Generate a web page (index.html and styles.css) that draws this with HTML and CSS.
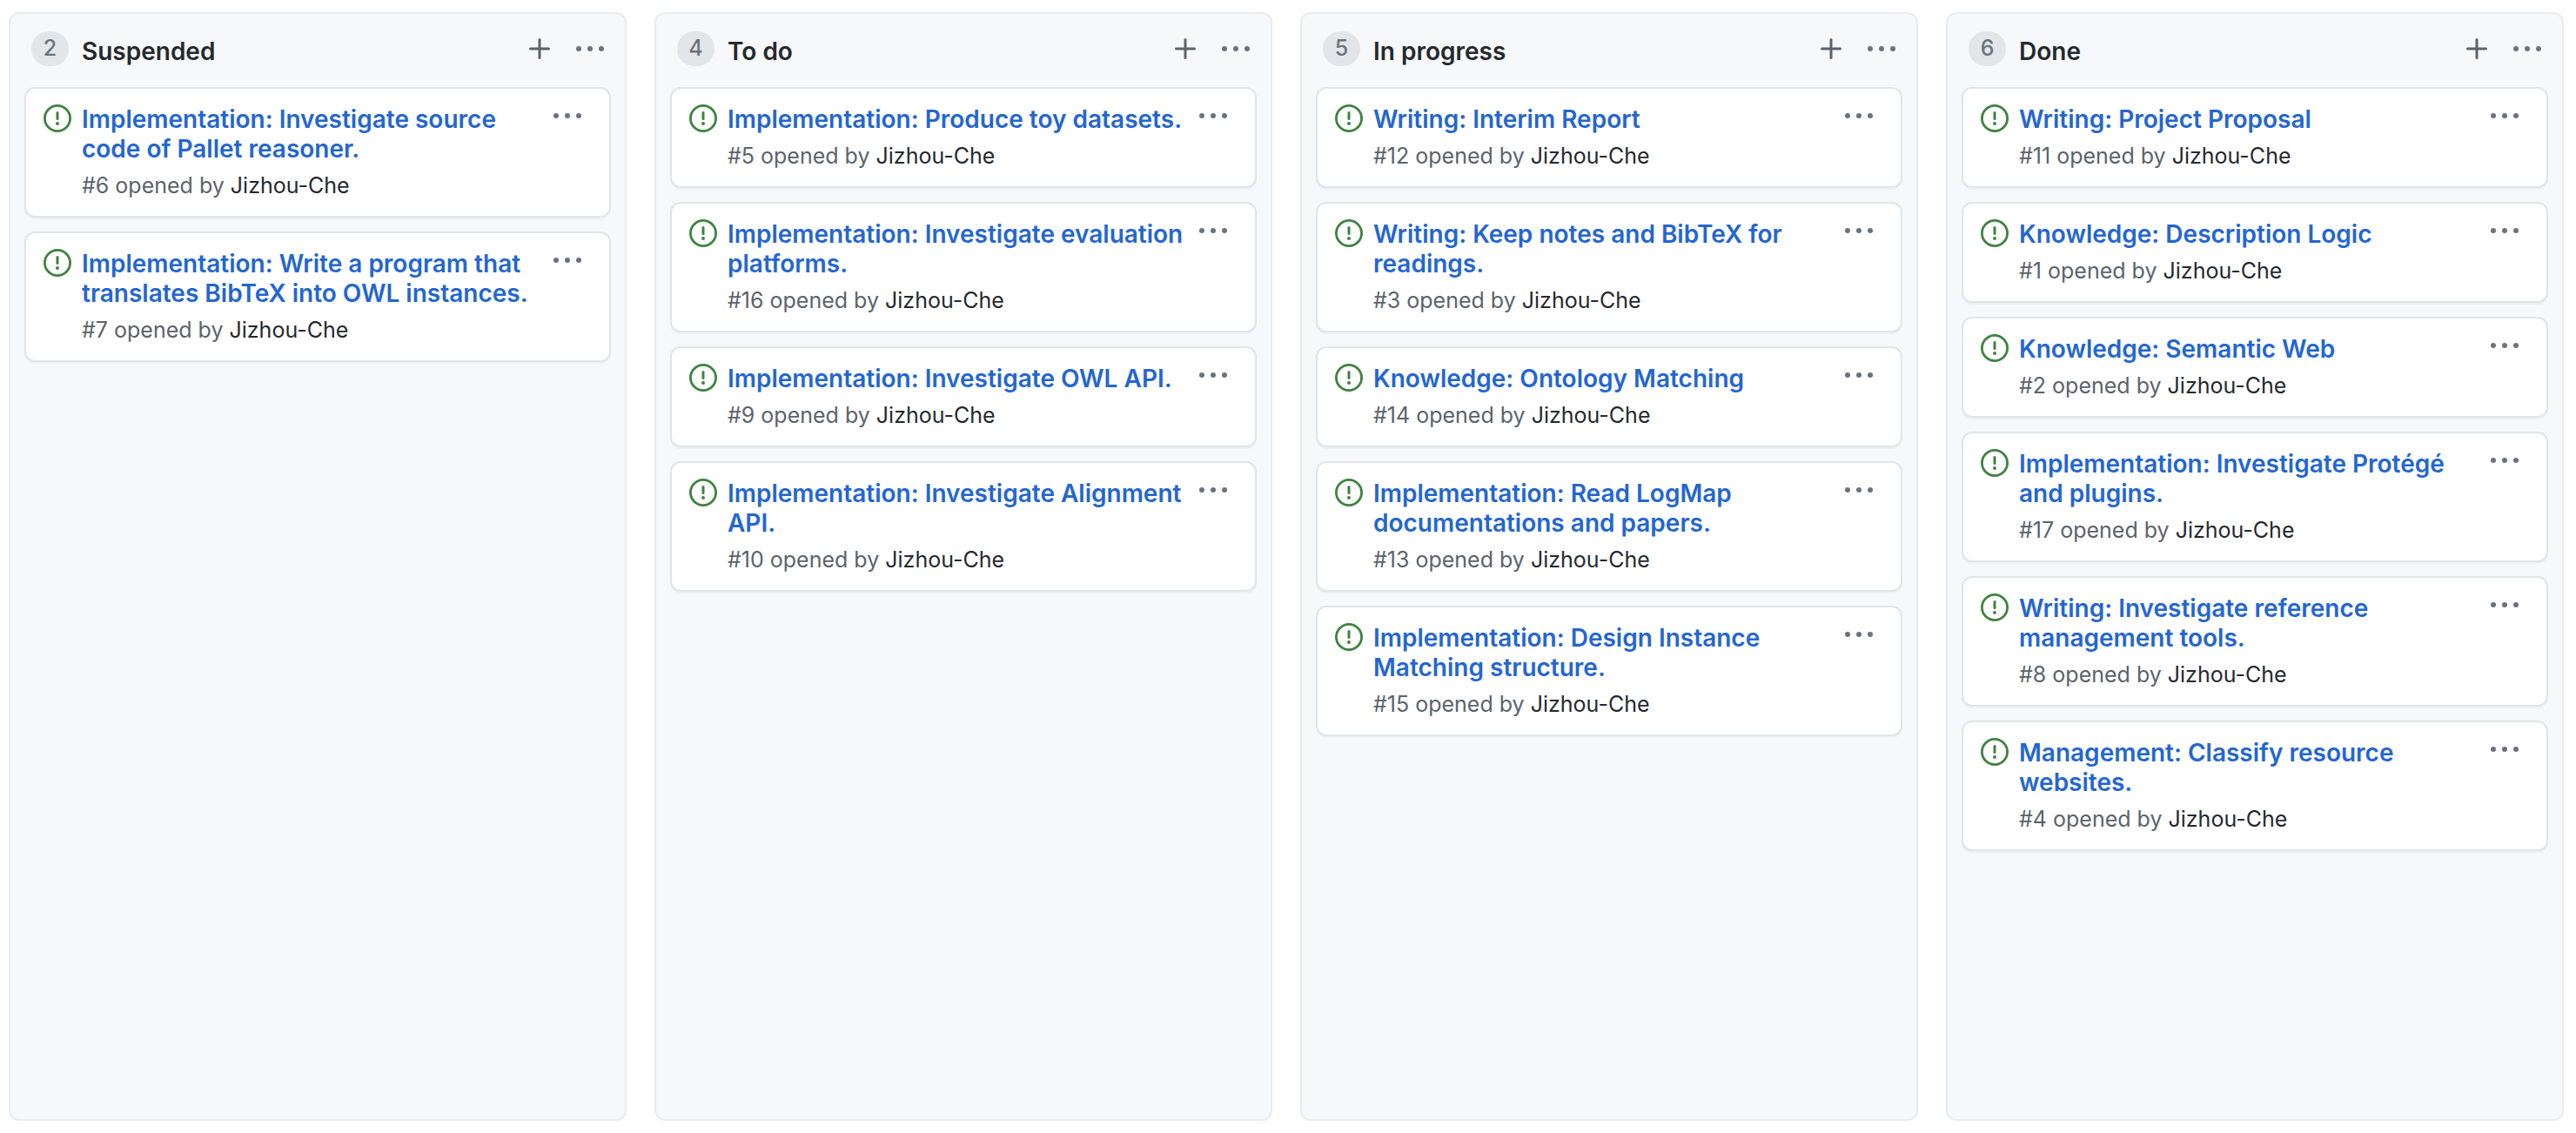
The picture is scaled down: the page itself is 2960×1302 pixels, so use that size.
FILE: index.html
```html
<!DOCTYPE html>
<html lang="en">
<head>
<meta charset="utf-8">
<title>Project board</title>
<link rel="stylesheet" href="styles.css">
</head>
<body>
<svg class="sprite" aria-hidden="true">
  <symbol id="issue" viewBox="0 0 16 16"><circle cx="8" cy="8" r="7.3" fill="none" stroke="currentColor" stroke-width="1.4"/><path d="M8 4.75v3.5" fill="none" stroke="currentColor" stroke-width="1.5" stroke-linecap="round"/><circle cx="8" cy="11" r="1" fill="currentColor"/></symbol>
  <symbol id="plus" viewBox="0 0 24 24"><path d="M12 1.5v21M1.5 12h21" fill="none" stroke="currentColor" stroke-width="3" stroke-linecap="round"/></symbol>
  <symbol id="dots" viewBox="0 0 32 6"><circle cx="3" cy="3" r="3"/><circle cx="16" cy="3" r="3"/><circle cx="29" cy="3" r="3"/></symbol>
</svg>
<main class="board">
  <section class="column">
    <header class="column-head">
      <span class="count">2</span>
      <h2 class="column-title">Suspended</h2>
      <button class="icon-button" aria-label="Add a card to Suspended"><svg class="plus"><use href="#plus"/></svg></button>
      <button class="icon-button" aria-label="Suspended options"><svg class="dots"><use href="#dots"/></svg></button>
    </header>
    <div class="cards">
      <article class="card">
        <svg class="issue"><use href="#issue"/></svg>
        <div class="card-body"><a class="card-title" href="#6">Implementation: Investigate source code of Pallet reasoner.</a><p class="meta">#6 opened by <a class="author" href="#Jizhou-Che">Jizhou-Che</a></p></div>
        <button class="icon-button card-menu" aria-label="Card options"><svg class="dots"><use href="#dots"/></svg></button>
      </article>
      <article class="card">
        <svg class="issue"><use href="#issue"/></svg>
        <div class="card-body"><a class="card-title" href="#7">Implementation: Write a program that translates BibTeX into OWL instances.</a><p class="meta">#7 opened by <a class="author" href="#Jizhou-Che">Jizhou-Che</a></p></div>
        <button class="icon-button card-menu" aria-label="Card options"><svg class="dots"><use href="#dots"/></svg></button>
      </article>
    </div>
  </section>

  <section class="column">
    <header class="column-head">
      <span class="count">4</span>
      <h2 class="column-title">To do</h2>
      <button class="icon-button" aria-label="Add a card to To do"><svg class="plus"><use href="#plus"/></svg></button>
      <button class="icon-button" aria-label="To do options"><svg class="dots"><use href="#dots"/></svg></button>
    </header>
    <div class="cards">
      <article class="card">
        <svg class="issue"><use href="#issue"/></svg>
        <div class="card-body"><a class="card-title" href="#5">Implementation: Produce toy datasets.</a><p class="meta">#5 opened by <a class="author" href="#Jizhou-Che">Jizhou-Che</a></p></div>
        <button class="icon-button card-menu" aria-label="Card options"><svg class="dots"><use href="#dots"/></svg></button>
      </article>
      <article class="card">
        <svg class="issue"><use href="#issue"/></svg>
        <div class="card-body"><a class="card-title" href="#16">Implementation: Investigate evaluation platforms.</a><p class="meta">#16 opened by <a class="author" href="#Jizhou-Che">Jizhou-Che</a></p></div>
        <button class="icon-button card-menu" aria-label="Card options"><svg class="dots"><use href="#dots"/></svg></button>
      </article>
      <article class="card">
        <svg class="issue"><use href="#issue"/></svg>
        <div class="card-body"><a class="card-title" href="#9">Implementation: Investigate OWL API.</a><p class="meta">#9 opened by <a class="author" href="#Jizhou-Che">Jizhou-Che</a></p></div>
        <button class="icon-button card-menu" aria-label="Card options"><svg class="dots"><use href="#dots"/></svg></button>
      </article>
      <article class="card">
        <svg class="issue"><use href="#issue"/></svg>
        <div class="card-body"><a class="card-title" href="#10">Implementation: Investigate Alignment API.</a><p class="meta">#10 opened by <a class="author" href="#Jizhou-Che">Jizhou-Che</a></p></div>
        <button class="icon-button card-menu" aria-label="Card options"><svg class="dots"><use href="#dots"/></svg></button>
      </article>
    </div>
  </section>

  <section class="column">
    <header class="column-head">
      <span class="count">5</span>
      <h2 class="column-title">In progress</h2>
      <button class="icon-button" aria-label="Add a card to In progress"><svg class="plus"><use href="#plus"/></svg></button>
      <button class="icon-button" aria-label="In progress options"><svg class="dots"><use href="#dots"/></svg></button>
    </header>
    <div class="cards">
      <article class="card">
        <svg class="issue"><use href="#issue"/></svg>
        <div class="card-body"><a class="card-title" href="#12">Writing: Interim Report</a><p class="meta">#12 opened by <a class="author" href="#Jizhou-Che">Jizhou-Che</a></p></div>
        <button class="icon-button card-menu" aria-label="Card options"><svg class="dots"><use href="#dots"/></svg></button>
      </article>
      <article class="card">
        <svg class="issue"><use href="#issue"/></svg>
        <div class="card-body"><a class="card-title" href="#3">Writing: Keep notes and BibTeX for readings.</a><p class="meta">#3 opened by <a class="author" href="#Jizhou-Che">Jizhou-Che</a></p></div>
        <button class="icon-button card-menu" aria-label="Card options"><svg class="dots"><use href="#dots"/></svg></button>
      </article>
      <article class="card">
        <svg class="issue"><use href="#issue"/></svg>
        <div class="card-body"><a class="card-title" href="#14">Knowledge: Ontology Matching</a><p class="meta">#14 opened by <a class="author" href="#Jizhou-Che">Jizhou-Che</a></p></div>
        <button class="icon-button card-menu" aria-label="Card options"><svg class="dots"><use href="#dots"/></svg></button>
      </article>
      <article class="card">
        <svg class="issue"><use href="#issue"/></svg>
        <div class="card-body"><a class="card-title" href="#13">Implementation: Read LogMap documentations and papers.</a><p class="meta">#13 opened by <a class="author" href="#Jizhou-Che">Jizhou-Che</a></p></div>
        <button class="icon-button card-menu" aria-label="Card options"><svg class="dots"><use href="#dots"/></svg></button>
      </article>
      <article class="card">
        <svg class="issue"><use href="#issue"/></svg>
        <div class="card-body"><a class="card-title" href="#15">Implementation: Design Instance Matching structure.</a><p class="meta">#15 opened by <a class="author" href="#Jizhou-Che">Jizhou-Che</a></p></div>
        <button class="icon-button card-menu" aria-label="Card options"><svg class="dots"><use href="#dots"/></svg></button>
      </article>
    </div>
  </section>

  <section class="column">
    <header class="column-head">
      <span class="count">6</span>
      <h2 class="column-title">Done</h2>
      <button class="icon-button" aria-label="Add a card to Done"><svg class="plus"><use href="#plus"/></svg></button>
      <button class="icon-button" aria-label="Done options"><svg class="dots"><use href="#dots"/></svg></button>
    </header>
    <div class="cards">
      <article class="card">
        <svg class="issue"><use href="#issue"/></svg>
        <div class="card-body"><a class="card-title" href="#11">Writing: Project Proposal</a><p class="meta">#11 opened by <a class="author" href="#Jizhou-Che">Jizhou-Che</a></p></div>
        <button class="icon-button card-menu" aria-label="Card options"><svg class="dots"><use href="#dots"/></svg></button>
      </article>
      <article class="card">
        <svg class="issue"><use href="#issue"/></svg>
        <div class="card-body"><a class="card-title" href="#1">Knowledge: Description Logic</a><p class="meta">#1 opened by <a class="author" href="#Jizhou-Che">Jizhou-Che</a></p></div>
        <button class="icon-button card-menu" aria-label="Card options"><svg class="dots"><use href="#dots"/></svg></button>
      </article>
      <article class="card">
        <svg class="issue"><use href="#issue"/></svg>
        <div class="card-body"><a class="card-title" href="#2">Knowledge: Semantic Web</a><p class="meta">#2 opened by <a class="author" href="#Jizhou-Che">Jizhou-Che</a></p></div>
        <button class="icon-button card-menu" aria-label="Card options"><svg class="dots"><use href="#dots"/></svg></button>
      </article>
      <article class="card">
        <svg class="issue"><use href="#issue"/></svg>
        <div class="card-body"><a class="card-title" href="#17">Implementation: Investigate Protégé and plugins.</a><p class="meta">#17 opened by <a class="author" href="#Jizhou-Che">Jizhou-Che</a></p></div>
        <button class="icon-button card-menu" aria-label="Card options"><svg class="dots"><use href="#dots"/></svg></button>
      </article>
      <article class="card">
        <svg class="issue"><use href="#issue"/></svg>
        <div class="card-body"><a class="card-title" href="#8">Writing: Investigate reference management tools.</a><p class="meta">#8 opened by <a class="author" href="#Jizhou-Che">Jizhou-Che</a></p></div>
        <button class="icon-button card-menu" aria-label="Card options"><svg class="dots"><use href="#dots"/></svg></button>
      </article>
      <article class="card">
        <svg class="issue"><use href="#issue"/></svg>
        <div class="card-body"><a class="card-title" href="#4">Management: Classify resource websites.</a><p class="meta">#4 opened by <a class="author" href="#Jizhou-Che">Jizhou-Che</a></p></div>
        <button class="icon-button card-menu" aria-label="Card options"><svg class="dots"><use href="#dots"/></svg></button>
      </article>
    </div>
  </section>
</main>
</body>
</html>
```
FILE: styles.css
```css
* {
  box-sizing: border-box;
}

body {
  margin: 0;
  background: #ffffff;
  color: #25292e;
  font-family: Inter, "Liberation Sans", sans-serif;
  font-size: 25px;
}

.sprite {
  display: none;
}

.board {
  display: grid;
  grid-template-columns: repeat(4, minmax(0, 1fr));
  gap: 32px;
  min-height: 100vh;
  padding: 14px 14px 14px 10px;
}

.column {
  background: #f6f8fa;
  border: 2px solid #eaebf0;
  border-radius: 12px;
}

.column-head {
  display: flex;
  align-items: center;
  height: 80px;
  padding: 0 24px;
}

.count {
  flex: none;
  width: 43px;
  height: 40px;
  border-radius: 20px;
  background: #e2e6e9;
  color: #6b737c;
  font-size: 25px;
  font-weight: 500;
  line-height: 38px;
  text-align: center;
}

.column-title {
  flex: 1;
  margin: 6px 0 0 15px;
  font-size: 28px;
  font-weight: 600;
  line-height: 34px;
}

.icon-button {
  flex: none;
  display: flex;
  margin-left: 30px;
  padding: 0;
  border: 0;
  background: none;
  color: #5b636b;
  cursor: pointer;
}

.issue {
  flex: none;
  width: 32px;
  height: 32px;
  color: #3f8340;
}

.plus {
  width: 24px;
  height: 24px;
}

.dots {
  width: 32px;
  height: 6px;
  fill: #6a737d;
}

.cards {
  display: flex;
  flex-direction: column;
  gap: 16px;
  padding: 4px 16px 16px;
}

.card {
  display: flex;
  align-items: flex-start;
  padding: 18px 32px 17px 20px;
  border: 2px solid #e1e4e8;
  border-radius: 12px;
  background: #ffffff;
  box-shadow: 0 2px 0 #eef0f2;
}

.card-body {
  flex: 1;
  min-width: 0;
  margin-left: 12px;
}

.card-title {
  display: block;
  color: #2466d0;
  font-size: 28px;
  font-weight: 600;
  line-height: 34px;
  text-decoration: none;
}

.meta {
  margin: 7px 0 0;
  color: #5b636b;
  font-size: 25px;
  line-height: 36px;
}

.author {
  color: #25292e;
  text-decoration: none;
}

.card-menu {
  margin: 10px 0 0 16px;
}
```
